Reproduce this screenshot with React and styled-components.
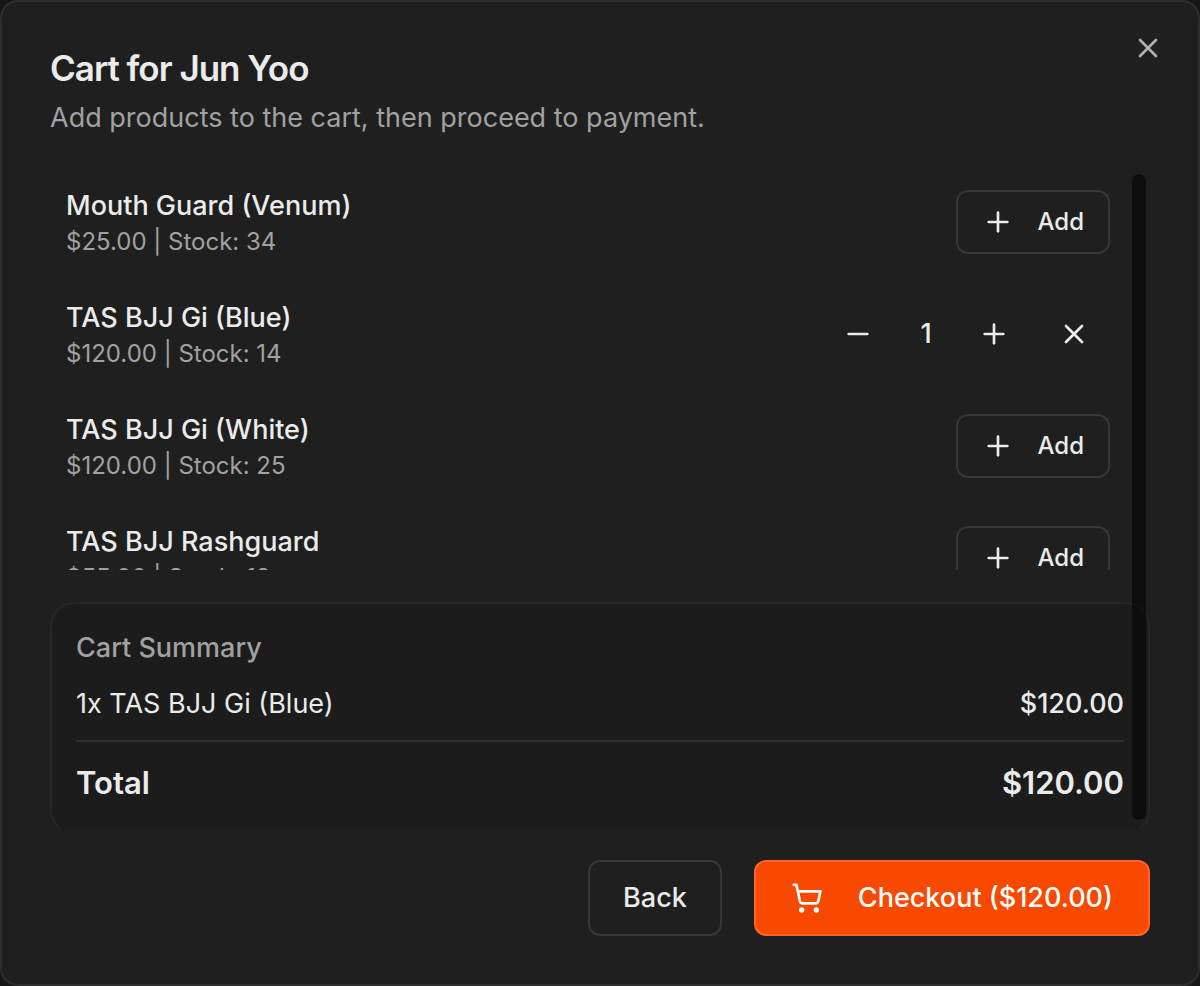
import React, { useState } from "react";
import styled, { createGlobalStyle, css } from "styled-components";
import { Minus, Plus, ShoppingCart, X } from "lucide-react";

const GlobalStyle = createGlobalStyle`
  *, *::before, *::after { box-sizing: border-box; }
  body {
    margin: 0;
    background: #171616;
    color: #ebebeb;
    font-family: Inter, "Liberation Sans", sans-serif;
    font-size: 27px;
    line-height: 40px;
    font-variation-settings: "opsz" 14;
    -webkit-font-smoothing: antialiased;
  }
  h1, h2, h3, p, ul { margin: 0; padding: 0; font-weight: inherit; font-size: inherit; }
  ul { list-style: none; }
  button { font: inherit; font-variation-settings: inherit; color: inherit; cursor: pointer; }
  svg { flex-shrink: 0; display: block; }
`;

const Dialog = styled.main`
  position: relative;
  display: flex;
  flex-direction: column;
  gap: 32px;
  height: 100vh;
  padding: 48px;
  background: #1f1f1f;
  border: 2px solid #2e2e2e;
  border-radius: 18px;
`;

const Header = styled.header`
  display: flex;
  flex-direction: column;
  gap: 12px;
`;

const Title = styled.h1`
  font-size: 35px;
  line-height: 36px;
  font-weight: 600;
  letter-spacing: -1px;
`;

const Description = styled.p`
  color: #a1a1a1;
`;

const CloseButton = styled.button`
  position: absolute;
  top: 30px;
  right: 34px;
  padding: 0;
  border: 0;
  background: none;
  color: #b0b0b0;
`;

const Body = styled.div`
  position: relative;
  flex: 1;
  min-height: 0;
`;

const BodyScroll = styled.div`
  display: flex;
  flex-direction: column;
  gap: 32px;
  height: 100%;
  overflow-y: auto;
  scrollbar-width: none;
`;

const ScrollThumb = styled.div`
  position: absolute;
  top: 4px;
  right: 4px;
  bottom: 8px;
  width: 14px;
  border-radius: 7px;
  background: rgba(0, 0, 0, 0.52);
  pointer-events: none;
`;

const ProductList = styled.ul`
  display: flex;
  flex-direction: column;
  flex-shrink: 0;
  gap: 8px;
  height: 400px;
  padding-right: 24px;
  overflow-y: auto;
  scrollbar-width: none;
`;

const ProductRow = styled.li`
  display: flex;
  align-items: center;
  justify-content: space-between;
  flex-shrink: 0;
  padding: 16px;
`;

const ProductName = styled.h3`
  font-weight: 500;
`;

const ProductMeta = styled.p`
  color: #a1a1a1;
  font-size: 24px;
  line-height: 32px;
`;

const Stepper = styled.div`
  display: flex;
  align-items: center;
  gap: 8px;
`;

const Quantity = styled.span`
  width: 48px;
  text-align: center;
  font-weight: 500;
`;

const sizes = {
  small: css`
    height: 64px;
    padding: 0 24px;
    gap: 24px;
    font-size: 24px;
    line-height: 32px;
  `,
  icon: css`
    height: 64px;
    width: 72px;
  `,
  large: css`
    height: 76px;
    padding: 0 33px;
  `,
  wide: css`
    height: 76px;
    padding: 0 35px;
    gap: 35px;
  `,
};

const tones = {
  outline: css`
    border-color: #363636;
    background: transparent;
  `,
  ghost: css`
    border-color: transparent;
    background: transparent;
  `,
  primary: css`
    border-color: #ff6429;
    background: #f74900;
    color: #ffffff;
  `,
};

const Button = styled.button`
  display: inline-flex;
  align-items: center;
  justify-content: center;
  border: 2px solid;
  border-radius: 12px;
  font-weight: 500;
  ${({ $size }) => sizes[$size]}
  ${({ $tone }) => tones[$tone]}
`;

const Summary = styled.section`
  display: flex;
  flex-direction: column;
  flex-shrink: 0;
  gap: 16px;
  padding: 24px;
  border: 2px solid #262626;
  border-radius: 24px;
  background: #1c1c1c;
`;

const SummaryTitle = styled.h2`
  color: #a1a1a1;
  font-weight: 500;
`;

const SummaryLine = styled.div`
  display: flex;
  justify-content: space-between;
`;

const Amount = styled.span`
  font-weight: 500;
`;

const TotalLine = styled(SummaryLine)`
  padding-top: 16px;
  border-top: 2px solid #2e2e2e;
  font-size: 31px;
  line-height: 50px;
  font-weight: 600;
`;

const Footer = styled.footer`
  display: flex;
  justify-content: flex-end;
  gap: 32px;
`;

const products = [
  { id: 1, name: "Mouth Guard (Venum)", price: 25, stock: 34 },
  { id: 2, name: "TAS BJJ Gi (Blue)", price: 120, stock: 14 },
  { id: 3, name: "TAS BJJ Gi (White)", price: 120, stock: 25 },
  { id: 4, name: "TAS BJJ Rashguard", price: 55, stock: 18 },
];

const money = (value) => `$${value.toFixed(2)}`;

export default function App() {
  const [cart, setCart] = useState({ 2: 1 });
  const setQuantity = (id, quantity) =>
    setCart((current) => ({ ...current, [id]: Math.max(0, quantity) }));
  const lines = products.filter((product) => cart[product.id] > 0);
  const total = lines.reduce((sum, p) => sum + p.price * cart[p.id], 0);

  return (
    <>
      <GlobalStyle />
      <Dialog role="dialog" aria-labelledby="cart-title">
        <Header>
          <Title id="cart-title">Cart for Jun Yoo</Title>
          <Description>Add products to the cart, then proceed to payment.</Description>
        </Header>
        <CloseButton type="button" aria-label="Close">
          <X size={32} />
        </CloseButton>

        <Body>
          <BodyScroll>
            <ProductList>
              {products.map(({ id, name, price, stock }) => (
                <ProductRow key={id}>
                  <div>
                    <ProductName>{name}</ProductName>
                    <ProductMeta>{`${money(price)} | Stock: ${stock}`}</ProductMeta>
                  </div>
                  {cart[id] > 0 ? (
                    <Stepper>
                      <Button type="button" $size="icon" $tone="ghost" aria-label="Decrease" onClick={() => setQuantity(id, cart[id] - 1)}>
                        <Minus size={32} />
                      </Button>
                      <Quantity>{cart[id]}</Quantity>
                      <Button type="button" $size="icon" $tone="ghost" aria-label="Increase" onClick={() => setQuantity(id, cart[id] + 1)}>
                        <Plus size={32} />
                      </Button>
                      <Button type="button" $size="icon" $tone="ghost" aria-label="Remove" onClick={() => setQuantity(id, 0)}>
                        <X size={32} />
                      </Button>
                    </Stepper>
                  ) : (
                    <Button type="button" $size="small" $tone="outline" onClick={() => setQuantity(id, 1)}>
                      <Plus size={32} />
                      Add
                    </Button>
                  )}
                </ProductRow>
              ))}
            </ProductList>

            <Summary>
              <SummaryTitle>Cart Summary</SummaryTitle>
              {lines.map(({ id, name, price }) => (
                <SummaryLine key={id}>
                  <span>{`${cart[id]}x ${name}`}</span>
                  <Amount>{money(price * cart[id])}</Amount>
                </SummaryLine>
              ))}
              <TotalLine>
                <span>Total</span>
                <span>{money(total)}</span>
              </TotalLine>
            </Summary>
          </BodyScroll>
          <ScrollThumb />
        </Body>

        <Footer>
          <Button type="button" $size="large" $tone="outline">Back</Button>
          <Button type="button" $size="wide" $tone="primary">
            <ShoppingCart size={32} />
            {`Checkout (${money(total)})`}
          </Button>
        </Footer>
      </Dialog>
    </>
  );
}
